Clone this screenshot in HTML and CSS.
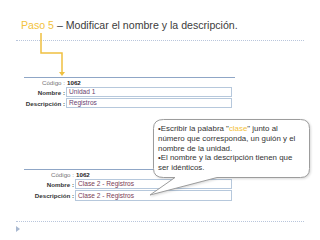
FILE: index.html
```html
<!DOCTYPE html>
<html lang="es">
<head>
<meta charset="utf-8">
<title>Paso 5</title>
<link rel="stylesheet" href="styles.css">
</head>
<body>
<div class="slide">
  <h1 class="title"><span class="step">Paso 5</span> – Modificar el nombre y la descripción.</h1>
  <div class="rule"></div>

  <div class="form form-a">
    <div class="row code-row"><span class="lbl light">Código :</span><span class="val">1062</span></div>
    <div class="row"><span class="lbl">Nombre :</span><span class="field">Unidad 1</span></div>
    <div class="row"><span class="lbl">Descripción :</span><span class="field">Registros</span></div>
  </div>

  <div class="form form-b">
    <div class="row code-row"><span class="lbl light">Código :</span><span class="val">1062</span></div>
    <div class="row"><span class="lbl">Nombre :</span><span class="field">Clase 2 - Registros</span></div>
    <div class="row"><span class="lbl">Descripción :</span><span class="field">Clase 2 - Registros</span></div>
  </div>

  <div class="rule rule-bottom"></div>
  <div class="marker"></div>

  <svg class="overlay" width="320" height="240" viewBox="0 0 320 240">
    <polyline points="41,33 41,53 62,53 62,72" fill="none" stroke="#f0c040" stroke-width="1.5"/>
    <polygon points="59,72 65,72 62,76" fill="#f0c040"/>
    <path class="bubble" d="M163.5,119.5 H300.5 Q309.5,119.5 309.5,128.5 V168.5 Q309.5,177.5 300.5,177.5 H217 L150,195 L175,177.5 H163.5 Q153.5,177.5 153.5,168.5 V128.5 Q153.5,119.5 163.5,119.5 Z"/>
  </svg>

  <div class="note">•Escribir la palabra "<span class="hl">clase</span>" junto al<br>número que corresponda, un guión y el<br>nombre de la unidad.<br>•El nombre y la descripción tienen que<br>ser idénticos.</div>
</div>
</body>
</html>
```

FILE: styles.css
```css
html, body {
  margin: 0;
  padding: 0;
  background: #ffffff;
}

.slide {
  position: relative;
  width: 320px;
  height: 240px;
  overflow: hidden;
  font-family: "Liberation Sans", Arial, sans-serif;
  padding-top: 19px;
  box-sizing: border-box;
}

.title {
  margin: 0 0 0 21px;
  font-size: 10.6px;
  font-weight: normal;
  line-height: 12px;
  color: #3c3c3c;
  white-space: nowrap;
}

.step {
  color: #f2c23c;
}

.rule {
  margin: 9px 16px 0 16px;
  border-top: 1px dotted #b9c6dc;
  height: 0;
}

.form {
  border-top: 1px solid #8fa6c6;
  font-size: 6.2px;
  display: flex;
  flex-direction: column;
  gap: 1px;
}

.form-a {
  margin: 36px 0 0 24px;
  width: 211px;
}

.form-b {
  margin: 61px 0 0 24px;
  width: 208px;
}

.row {
  display: grid;
  align-items: center;
  height: 10px;
}

.form-a .row { grid-template-columns: 42px 1fr; }
.form-b .row { grid-template-columns: 51px 1fr; }

.code-row { height: 8px; }

.lbl {
  text-align: right;
  font-weight: bold;
  color: #333;
  padding-right: 1px;
  white-space: nowrap;
}

.lbl.light {
  font-weight: normal;
  color: #777;
}

.val {
  font-weight: bold;
  color: #222;
  padding-left: 1px;
}

.field {
  height: 10px;
  box-sizing: border-box;
  border: 1px solid #b6c8dc;
  color: #6b3f6f;
  line-height: 8px;
  padding-left: 2px;
  white-space: nowrap;
  margin-right: 3px;
  font-size: 6.6px;
}

.form-b .field { margin-right: 0; color: #7a3d55; }
.form-b .row:last-child .field { height: 11px; line-height: 9px; }

.rule-bottom {
  margin-top: 21px;
}

.marker {
  margin: 4px 0 0 16px;
  width: 0;
  height: 0;
  border-top: 3px solid transparent;
  border-bottom: 3px solid transparent;
  border-left: 4px solid #a8b8d0;
}

.overlay {
  position: absolute;
  left: 0;
  top: 0;
  pointer-events: none;
}

.bubble {
  fill: #ffffff;
  stroke: #9c9c9c;
  stroke-width: 1;
  filter: drop-shadow(1px 1px 1px rgba(0,0,0,0.15));
}

.note {
  position: absolute;
  left: 158px;
  top: 124px;
  font-size: 7.9px;
  line-height: 9.8px;
  color: #333;
  white-space: nowrap;
}

.hl {
  color: #f2c23c;
}
```
